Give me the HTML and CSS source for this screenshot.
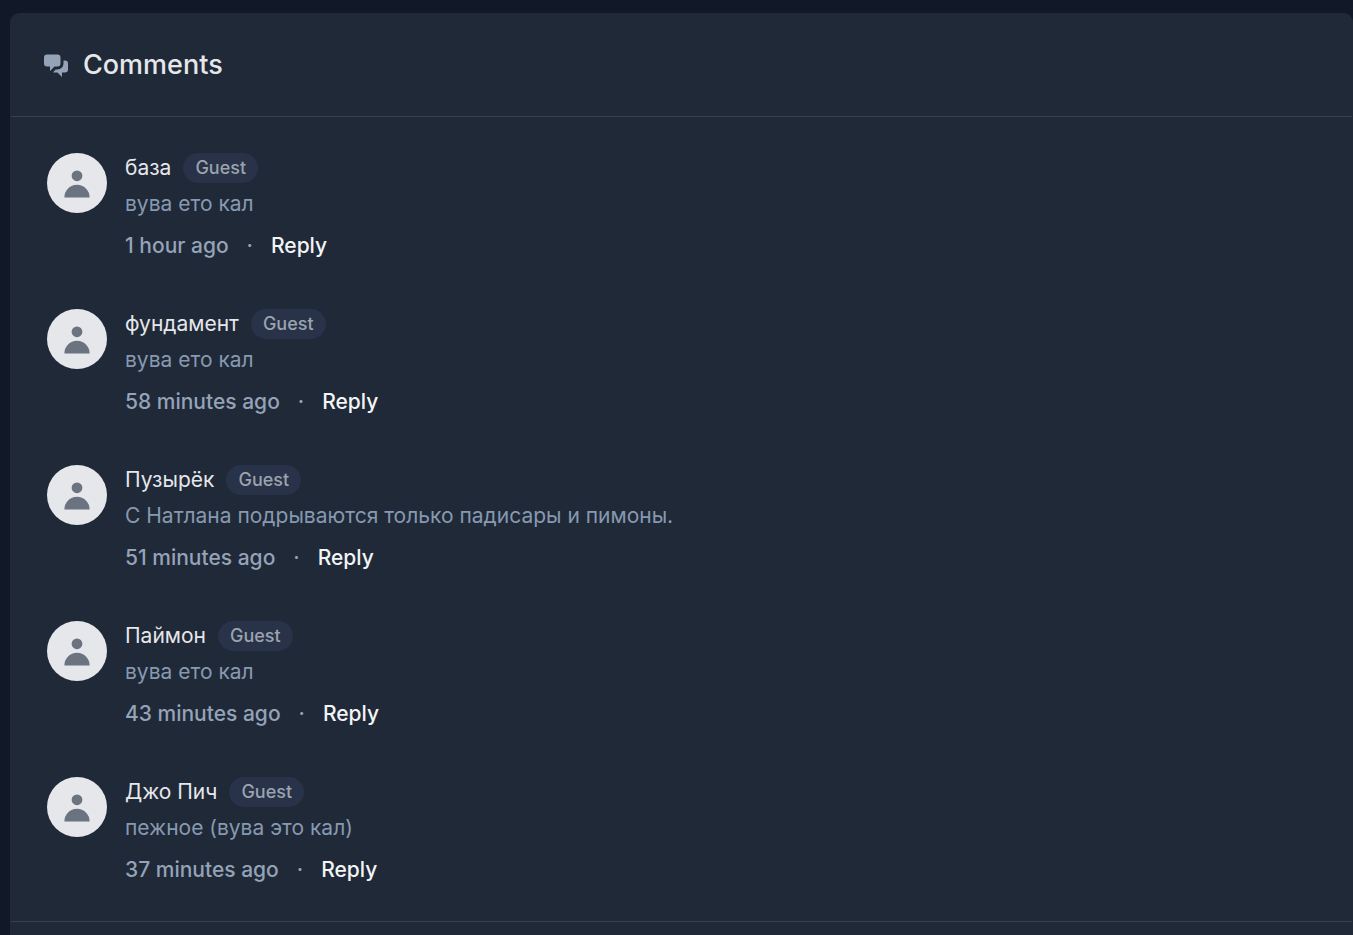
FILE: index.html
```html
<!DOCTYPE html>
<html lang="en">
<head>
<meta charset="UTF-8">
<meta name="viewport" content="width=device-width, initial-scale=1.0">
<title>Comments</title>
<link rel="stylesheet" href="styles.css">
</head>
<body>
    <!-- shared icons -->
    <svg class="sprite" aria-hidden="true">
        <symbol id="icon-chat" viewBox="0 0 20 20">
            <path d="M2 5a2 2 0 012-2h7a2 2 0 012 2v4a2 2 0 01-2 2H9l-3 3v-3H4a2 2 0 01-2-2V5z"/>
            <path d="M15 7v2a4 4 0 01-4 4H9.828l-1.766 1.767c.28.149.599.233.938.233h2l3 3v-3h2a2 2 0 002-2V9a2 2 0 00-2-2h-1z"/>
        </symbol>
        <symbol id="icon-user" viewBox="0 0 20 20">
            <path d="M10 9a3 3 0 100-6 3 3 0 000 6zm-7 9a7 7 0 1114 0H3z"/>
        </symbol>
    </svg>

    <section class="comments">
        <header class="comments-header">
            <svg class="header-icon" aria-hidden="true"><use href="#icon-chat"/></svg>
            <h2>Comments</h2>
        </header>

        <ul class="comment-list">
            <li class="comment">
                <div class="avatar"><svg aria-hidden="true"><use href="#icon-user"/></svg></div>
                <div class="comment-body">
                    <div class="comment-author">
                        <span class="name">база</span>
                        <span class="badge">Guest</span>
                    </div>
                    <p class="comment-text">вува ето кал</p>
                    <div class="comment-meta">
                        <span class="time">1 hour ago</span>
                        <span class="dot">·</span>
                        <button type="button" class="reply">Reply</button>
                    </div>
                </div>
            </li>
            <li class="comment">
                <div class="avatar"><svg aria-hidden="true"><use href="#icon-user"/></svg></div>
                <div class="comment-body">
                    <div class="comment-author">
                        <span class="name">фундамент</span>
                        <span class="badge">Guest</span>
                    </div>
                    <p class="comment-text">вува ето кал</p>
                    <div class="comment-meta">
                        <span class="time">58 minutes ago</span>
                        <span class="dot">·</span>
                        <button type="button" class="reply">Reply</button>
                    </div>
                </div>
            </li>
            <li class="comment">
                <div class="avatar"><svg aria-hidden="true"><use href="#icon-user"/></svg></div>
                <div class="comment-body">
                    <div class="comment-author">
                        <span class="name">Пузырёк</span>
                        <span class="badge">Guest</span>
                    </div>
                    <p class="comment-text">С Натлана подрываются только падисары и пимоны.</p>
                    <div class="comment-meta">
                        <span class="time">51 minutes ago</span>
                        <span class="dot">·</span>
                        <button type="button" class="reply">Reply</button>
                    </div>
                </div>
            </li>
            <li class="comment">
                <div class="avatar"><svg aria-hidden="true"><use href="#icon-user"/></svg></div>
                <div class="comment-body">
                    <div class="comment-author">
                        <span class="name">Паймон</span>
                        <span class="badge">Guest</span>
                    </div>
                    <p class="comment-text">вува ето кал</p>
                    <div class="comment-meta">
                        <span class="time">43 minutes ago</span>
                        <span class="dot">·</span>
                        <button type="button" class="reply">Reply</button>
                    </div>
                </div>
            </li>
            <li class="comment">
                <div class="avatar"><svg aria-hidden="true"><use href="#icon-user"/></svg></div>
                <div class="comment-body">
                    <div class="comment-author">
                        <span class="name">Джо Пич</span>
                        <span class="badge">Guest</span>
                    </div>
                    <p class="comment-text">пежное (вува это кал)</p>
                    <div class="comment-meta">
                        <span class="time">37 minutes ago</span>
                        <span class="dot">·</span>
                        <button type="button" class="reply">Reply</button>
                    </div>
                </div>
            </li>
        </ul>
    </section>
</body>
</html>
```
FILE: styles.css
```css
* {
    box-sizing: border-box;
}

body {
    display: flex;
    flex-direction: column;
    min-height: 100vh;
    margin: 0;
    padding: 13px 0 0 10px;
    background-color: #111827;
    font-family: Inter, sans-serif;
    font-size: 21px;
    line-height: 30px;
}

h2, p, ul {
    margin: 0;
    padding: 0;
}

.sprite {
    display: none;
}

.comments {
    flex: 1;
    border: 1px solid #202937;
    border-bottom: 0;
    border-radius: 9px 9px 0 0;
    background-color: #202937;
}

/* Header */
.comments-header {
    display: flex;
    align-items: center;
    gap: 12px;
    padding: 30px;
    border-bottom: 1px solid #374151;
}

.comments-header h2 {
    color: #e5e7eb;
    font-size: 27px;
    font-weight: 500;
    line-height: 42px;
}

.header-icon {
    width: 30px;
    height: 30px;
    fill: #94a3b8;
}

/* List */
.comment-list {
    display: flex;
    flex-direction: column;
    gap: 48px;
    padding: 36px;
    border-bottom: 1px solid #374151;
    list-style: none;
}

.comment {
    display: flex;
    gap: 18px;
}

.avatar {
    display: flex;
    flex-shrink: 0;
    align-items: center;
    justify-content: center;
    width: 60px;
    height: 60px;
    border-radius: 50%;
    background-color: #e5e7eb;
}

.avatar svg {
    width: 36px;
    height: 36px;
    fill: #6b7280;
}

.comment-author {
    display: flex;
    align-items: center;
    gap: 12px;
    margin-bottom: 6px;
}

.name {
    color: #e5e7eb;
}

.badge {
    padding: 0 12px;
    border-radius: 15px;
    background-color: #283248;
    color: #9ca3af;
    font-size: 18px;
    font-weight: 500;
}

.comment-text {
    margin-bottom: 12px;
    color: #8799b1;
}

.comment-meta {
    display: flex;
    align-items: center;
    gap: 18px;
    color: #94a3b8;
    font-weight: 500;
}

.reply {
    padding: 0;
    border: none;
    background: none;
    color: #f3f4f6;
    font: inherit;
    cursor: pointer;
}

.reply:hover {
    text-decoration: underline;
}
```
